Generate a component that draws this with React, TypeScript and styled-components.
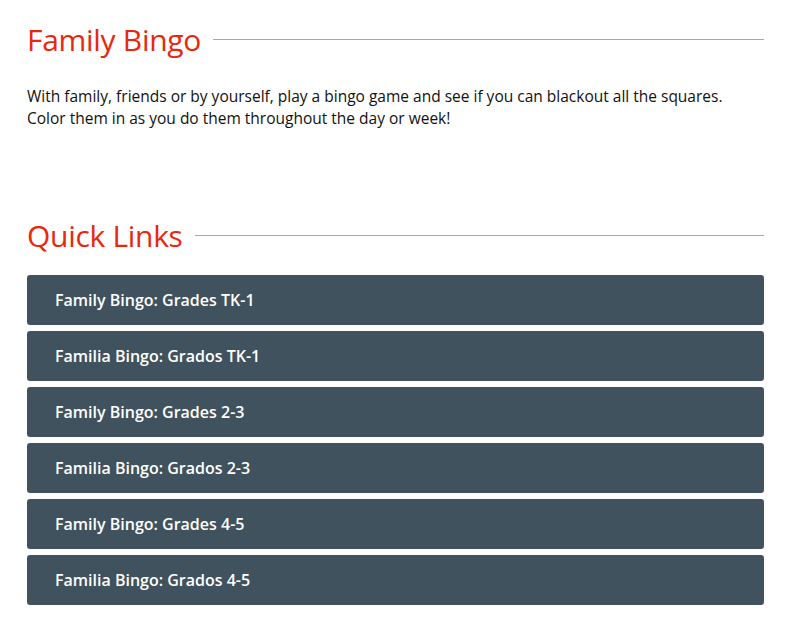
import React from 'react'
import styled, { createGlobalStyle } from 'styled-components'

const LINKS = [
  'Family Bingo: Grades TK-1',
  'Familia Bingo: Grados TK-1',
  'Family Bingo: Grades 2-3',
  'Familia Bingo: Grados 2-3',
  'Family Bingo: Grades 4-5',
  'Familia Bingo: Grados 4-5',
]

const App: React.FC = () => {
  return (
    <>
      <GlobalStyle />
      <Page>
        <Section>
          <Heading>
            <HeadingText>Family Bingo</HeadingText>
            <Rule />
          </Heading>
          <Intro>
            <IntroLine>
              With family, friends or by yourself, play a bingo game and see if you can blackout all the squares.
            </IntroLine>
            <IntroLine>Color them in as you do them throughout the day or week!</IntroLine>
          </Intro>
        </Section>
        <Section>
          <Heading>
            <HeadingText>Quick Links</HeadingText>
            <Rule />
          </Heading>
          <LinkList>
            {LINKS.map((label) => (
              <LinkButton key={label} href='#'>
                {label}
              </LinkButton>
            ))}
          </LinkList>
        </Section>
      </Page>
    </>
  )
}

export default App

const GlobalStyle = createGlobalStyle`
  body {
    margin: 0;
    background: #ffffff;
    font-family: 'Open Sans', 'Noto Sans', sans-serif;
    color: #111111;
  }
`

const Page = styled.div`
  padding: 18px 35px 0 27px;
  display: flex;
  flex-direction: column;
  gap: 85px;
`

const Section = styled.section`
  display: flex;
  flex-direction: column;
`

const Heading = styled.div`
  display: flex;
  align-items: center;
  gap: 12px;
  height: 42px;
`

const HeadingText = styled.h2`
  margin: 0;
  font-weight: 400;
  font-size: 30px;
  color: #e8280e;
  white-space: nowrap;
  letter-spacing: -0.3px;
`

const Rule = styled.div`
  flex: 1;
  height: 1px;
  background: #a8a8a8;
`

const Intro = styled.div`
  margin-top: 26px;
  display: flex;
  flex-direction: column;
`

const IntroLine = styled.p`
  margin: 0;
  font-size: 15.5px;
  line-height: 21.5px;
  white-space: nowrap;
`

const LinkList = styled.div`
  display: flex;
  flex-direction: column;
  gap: 6px;
  margin-top: 19px;
`

const LinkButton = styled.a`
  display: flex;
  align-items: center;
  height: 50px;
  padding: 0 28px;
  border-radius: 3px;
  background: #3f525d;
  color: #ffffff;
  font-size: 16px;
  font-weight: 600;
  text-decoration: none;
`
